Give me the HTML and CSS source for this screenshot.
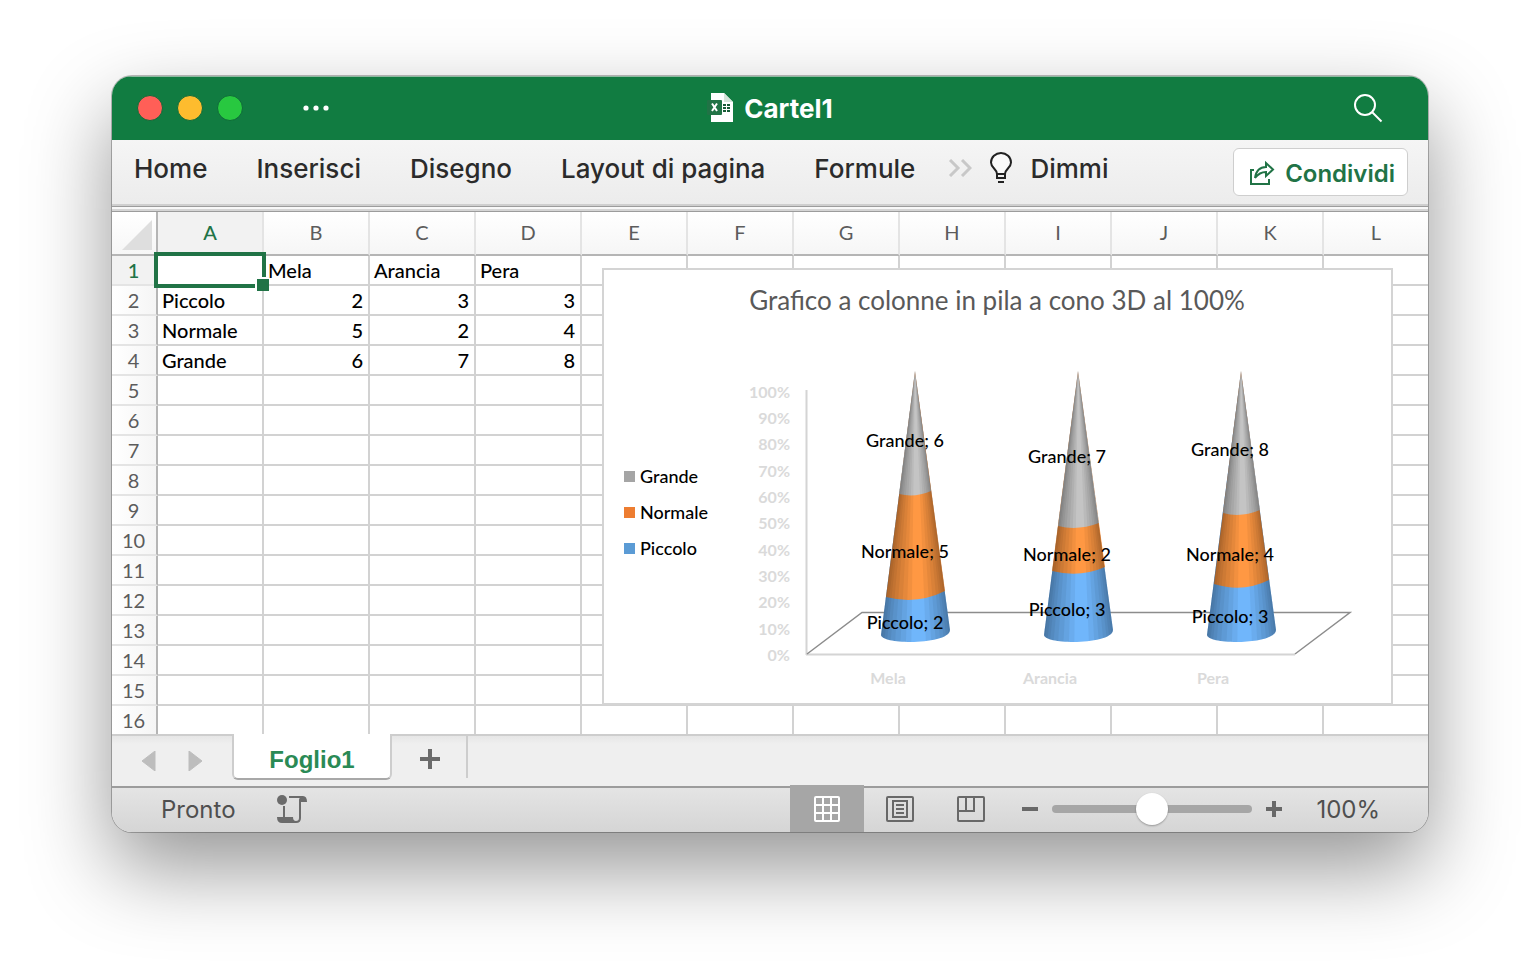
FILE: index.html
```html
<!DOCTYPE html>
<html lang="it">
<head>
    <meta charset="UTF-8">
    <meta name="viewport" content="width=device-width, initial-scale=1.0">
    <title>Cartel1</title>
    <link rel="stylesheet" href="styles.css">
</head>
<body>
    <div class="window">
        <header class="titlebar">
            <div class="title-left">
                <button class="light red" aria-label="Chiudi"></button>
                <button class="light yellow" aria-label="Riduci"></button>
                <button class="light green" aria-label="Ingrandisci"></button>
                <button class="icon-btn more" aria-label="Altro">
                    <svg width="26" height="6" viewBox="0 0 26 6" fill="#fff"><circle cx="3" cy="3" r="2.6"/><circle cx="13" cy="3" r="2.6"/><circle cx="23" cy="3" r="2.6"/></svg>
                </button>
            </div>
            <h1>
                <svg width="27" height="30" viewBox="0 0 27 30">
                    <path d="M4 0H17L26 9V29H4Z" fill="#fff"/>
                    <path d="M17 0V9H26Z" fill="#d5e5da"/>
                    <rect y="7" width="15" height="15" rx="1" fill="#217346"/>
                    <path d="M5 10.500L10 18M10 10.500L5 18" stroke="#fff" stroke-width="2"/>
                    <path d="M16 11h3v2h-3zM20 11h3v2h-3zM16 14h3v2h-3zM20 14h3v2h-3zM16 17h3v2h-3zM20 17h3v2h-3z" fill="#185c37"/>
                </svg>
                Cartel1
            </h1>
            <div class="title-right">
                <button class="icon-btn" aria-label="Cerca">
                    <svg width="30" height="30" viewBox="0 0 30 30" fill="none" stroke="#fff" stroke-width="2"><circle cx="12" cy="12" r="10"/><path d="M19 19L28.500 28.500"/></svg>
                </button>
            </div>
        </header>

        <nav class="ribbon">
            <button>Home</button>
            <button>Inserisci</button>
            <button>Disegno</button>
            <button>Layout di pagina</button>
            <button>Formule</button>
            <button class="overflow" aria-label="Altre schede">
                <svg width="24" height="18" viewBox="0 0 24 18" fill="none" stroke="#c8c8c8" stroke-width="3"><path d="M2 1L10 9L2 17M14 1L22 9L14 17"/></svg>
            </button>
            <button class="tell">
                <svg width="22" height="32" viewBox="0 0 22 32" fill="none" stroke="#222" stroke-width="2">
                    <path d="M7 22C7 17 1 16 1 10.500A10 9.500 0 0 1 21 10.500C21 16 15 17 15 22Z" fill="#fafafa"/>
                    <path d="M7 22V26H15V22M8 30H14"/>
                </svg>
                Dimmi
            </button>
            <button class="share">
                <svg width="26" height="26" viewBox="0 0 26 26" fill="none" stroke="#217346" stroke-width="2">
                    <path d="M5 10H2V24H20V19"/>
                    <path d="M6 18C7 11 11 7 17 7V3L24 9.500L17 16V12C12 12 9 14 6 18Z"/>
                </svg>
                Condividi
            </button>
        </nav>

        <main class="sheet">
            <table>
                <thead>
                    <tr><th class="corner" aria-label="Seleziona tutto"><svg width="30" height="30" viewBox="0 0 30 30"><path d="M30 0V30H0Z" fill="#dedede"/></svg></th><th class="current">A</th><th>B</th><th>C</th><th>D</th><th>E</th><th>F</th><th>G</th><th>H</th><th>I</th><th>J</th><th>K</th><th>L</th></tr>
                </thead>
                <tbody>
                    <tr><th class="current">1</th><td class="selected"><span class="cursor"></span></td><td>Mela</td><td>Arancia</td><td>Pera</td><td></td><td></td><td></td><td></td><td></td><td></td><td></td><td></td></tr>
                    <tr><th>2</th><td>Piccolo</td><td class="num">2</td><td class="num">3</td><td class="num">3</td><td></td><td></td><td></td><td></td><td></td><td></td><td></td><td></td></tr>
                    <tr><th>3</th><td>Normale</td><td class="num">5</td><td class="num">2</td><td class="num">4</td><td></td><td></td><td></td><td></td><td></td><td></td><td></td><td></td></tr>
                    <tr><th>4</th><td>Grande</td><td class="num">6</td><td class="num">7</td><td class="num">8</td><td></td><td></td><td></td><td></td><td></td><td></td><td></td><td></td></tr>
                    <tr><th>5</th><td></td><td></td><td></td><td></td><td></td><td></td><td></td><td></td><td></td><td></td><td></td><td></td></tr>
                    <tr><th>6</th><td></td><td></td><td></td><td></td><td></td><td></td><td></td><td></td><td></td><td></td><td></td><td></td></tr>
                    <tr><th>7</th><td></td><td></td><td></td><td></td><td></td><td></td><td></td><td></td><td></td><td></td><td></td><td></td></tr>
                    <tr><th>8</th><td></td><td></td><td></td><td></td><td></td><td></td><td></td><td></td><td></td><td></td><td></td><td></td></tr>
                    <tr><th>9</th><td></td><td></td><td></td><td></td><td></td><td></td><td></td><td></td><td></td><td></td><td></td><td></td></tr>
                    <tr><th>10</th><td></td><td></td><td></td><td></td><td></td><td></td><td></td><td></td><td></td><td></td><td></td><td></td></tr>
                    <tr><th>11</th><td></td><td></td><td></td><td></td><td></td><td></td><td></td><td></td><td></td><td></td><td></td><td></td></tr>
                    <tr><th>12</th><td></td><td></td><td></td><td></td><td></td><td></td><td></td><td></td><td></td><td></td><td></td><td></td></tr>
                    <tr><th>13</th><td></td><td></td><td></td><td></td><td></td><td></td><td></td><td></td><td></td><td></td><td></td><td></td></tr>
                    <tr><th>14</th><td></td><td></td><td></td><td></td><td></td><td></td><td></td><td></td><td></td><td></td><td></td><td></td></tr>
                    <tr><th>15</th><td></td><td></td><td></td><td></td><td></td><td></td><td></td><td></td><td></td><td></td><td></td><td></td></tr>
                    <tr class="last"><th>16</th><td></td><td></td><td></td><td></td><td></td><td></td><td></td><td></td><td></td><td></td><td></td><td></td></tr>
                </tbody>
            </table>

            <!-- chart floating over the cells -->
            <svg class="chart" width="791" height="437" viewBox="0 0 791 437">
                <defs>
                    <clipPath id="coneClip"><path d="M0 0L-34 264C-33 274 34 274 35 259Z"/></clipPath>
                    <!-- side shading, wedges fan out from the tip -->
                    <g id="shade" clip-path="url(#coneClip)" fill="#000" fill-opacity="0.05">
                        <path d="M0 0L-42 300H-37Z"/>
                        <path d="M0 0L-42 300H-34Z"/>
                        <path d="M0 0L-42 300H-31Z"/>
                        <path d="M0 0L-42 300H-27Z"/>
                        <path d="M0 0L-42 300H-22Z"/>
                        <path d="M0 0L-42 300H-16Z"/>
                        <path d="M0 0L-42 300H-10Z"/>
                        <path d="M0 0L-42 300H-4Z"/>
                        <path d="M0 0L44 300H38Z"/>
                        <path d="M0 0L44 300H35Z"/>
                        <path d="M0 0L44 300H32Z"/>
                        <path d="M0 0L44 300H28Z"/>
                        <path d="M0 0L44 300H23Z"/>
                        <path d="M0 0L44 300H18Z"/>
                        <path d="M0 0L44 300H12Z"/>
                    </g>
                </defs>
                <rect x="1" y="1" width="789" height="435" fill="#fff" stroke="#d4d4d4" stroke-width="2"/>
                <text class="chart-title" x="395" y="42">Grafico a colonne in pila a cono 3D al 100%</text>

                <g class="legend">
                    <rect x="22" y="203" width="11" height="11" fill="#a5a5a5"/>
                    <rect x="22" y="239" width="11" height="11" fill="#ed7d31"/>
                    <rect x="22" y="275" width="11" height="11" fill="#5b9bd5"/>
                    <text x="38" y="215">Grande</text>
                    <text x="38" y="251">Normale</text>
                    <text x="38" y="287">Piccolo</text>
                </g>

                <g class="axis">
                    <text x="188" y="130">100%</text>
                    <text x="188" y="156">90%</text>
                    <text x="188" y="182">80%</text>
                    <text x="188" y="209">70%</text>
                    <text x="188" y="235">60%</text>
                    <text x="188" y="261">50%</text>
                    <text x="188" y="288">40%</text>
                    <text x="188" y="314">30%</text>
                    <text x="188" y="340">20%</text>
                    <text x="188" y="367">10%</text>
                    <text x="188" y="393">0%</text>
                </g>
                <g class="categories">
                    <text x="286" y="416">Mela</text>
                    <text x="448" y="416">Arancia</text>
                    <text x="611" y="416">Pera</text>
                </g>

                <path d="M204.500 122V387M204 386.500H693" fill="none" stroke="#d4d4d4" stroke-width="2"/>
                <path d="M205 386L260 344.500H748L693 386" fill="none" stroke="#8c8c8c" stroke-width="1.500"/>

                <g transform="translate(313 103)">
                    <path d="M0 0L-34 264C-33 274 34 274 35 259Z" fill="#70b6fb"/>
                    <path d="M0 0L-29 226Q2 234 30 220Z" fill="#ff9843"/>
                    <path d="M0 0L-16 123Q0 127 16 120Z" fill="#c4c4c4"/>
                    <use href="#shade"/>
                </g>
                <g transform="translate(476 103)">
                    <path d="M0 0L-34 264C-33 274 34 274 35 259Z" fill="#70b6fb"/>
                    <path d="M0 0L-26 200Q2 207 27 196Z" fill="#ff9843"/>
                    <path d="M0 0L-20 155Q0 160 21 152Z" fill="#c4c4c4"/>
                    <use href="#shade"/>
                </g>
                <g transform="translate(639 103)">
                    <path d="M0 0L-34 264C-33 274 34 274 35 259Z" fill="#70b6fb"/>
                    <path d="M0 0L-27 213Q2 222 28 209Z" fill="#ff9843"/>
                    <path d="M0 0L-18 142Q0 147 19 139Z" fill="#c4c4c4"/>
                    <use href="#shade"/>
                </g>

                <g class="labels">
                    <text x="303" y="179">Grande; 6</text>
                    <text x="303" y="290">Normale; 5</text>
                    <text x="303" y="361">Piccolo; 2</text>
                    <text x="465" y="195">Grande; 7</text>
                    <text x="465" y="293">Normale; 2</text>
                    <text x="465" y="348">Piccolo; 3</text>
                    <text x="628" y="188">Grande; 8</text>
                    <text x="628" y="293">Normale; 4</text>
                    <text x="628" y="355">Piccolo; 3</text>
                </g>
            </svg>
        </main>

        <div class="tabs">
            <button class="arrow" aria-label="Foglio precedente"><svg width="16" height="20" viewBox="0 0 16 20"><path d="M14 0V20L1 10Z" fill="#bdbdbd" stroke="#bdbdbd" stroke-linejoin="round"/></svg></button>
            <button class="arrow" aria-label="Foglio successivo"><svg width="16" height="20" viewBox="0 0 16 20"><path d="M2 0V20L15 10Z" fill="#bdbdbd" stroke="#bdbdbd" stroke-linejoin="round"/></svg></button>
            <button class="tab">Foglio1</button>
            <button class="add" aria-label="Nuovo foglio"><svg width="20" height="20" viewBox="0 0 20 20" stroke="#6b6b6b" stroke-width="4"><path d="M0 10H20M10 0V20"/></svg></button>
        </div>

        <footer class="status">
            <span class="ready">Pronto</span>
            <button class="icon-btn macro" aria-label="Registra macro">
                <svg width="32" height="30" viewBox="0 0 32 30" fill="#6b6b6b">
                    <circle cx="6" cy="6" r="5"/>
                    <path d="M13 2H27Q31 2 31 8H25V24Q25 29 20 29H6Q1 29 1 23H17Q17 27 20 27Q23 27 23 24V6Q23 4 24 4H13Z"/>
                    <path d="M7 12H9V24H7Z"/>
                </svg>
            </button>
            <button class="view active" aria-label="Normale">
                <svg width="28" height="28" viewBox="0 0 28 28" fill="none" stroke="#fff" stroke-width="2"><rect x="2" y="2" width="24" height="24" rx="1"/><path d="M10 2V26M18 2V26M2 10H26M2 18H26"/></svg>
            </button>
            <button class="view" aria-label="Layout di pagina">
                <svg width="28" height="28" viewBox="0 0 28 28" fill="none" stroke="#686868" stroke-width="2"><rect x="1" y="2" width="26" height="24" rx="1"/><rect x="7" y="6" width="14" height="16"/><path d="M10 10H18M10 14H18M10 18H18"/></svg>
            </button>
            <button class="view" aria-label="Anteprima interruzioni">
                <svg width="28" height="28" viewBox="0 0 28 28" fill="none" stroke="#686868" stroke-width="2"><rect x="1" y="2" width="26" height="24" rx="1"/><path d="M9 2V16M17 2V16H1"/></svg>
            </button>
            <button class="icon-btn step" aria-label="Riduci zoom"><svg width="16" height="16" viewBox="0 0 16 16" stroke="#686868" stroke-width="4"><path d="M0 8H16"/></svg></button>
            <input class="zoom" type="range" min="0" max="200" value="100" aria-label="Zoom">
            <button class="icon-btn step" aria-label="Aumenta zoom"><svg width="16" height="16" viewBox="0 0 16 16" stroke="#686868" stroke-width="4"><path d="M0 8H16M8 0V16"/></svg></button>
            <span class="percent">100%</span>
        </footer>
    </div>
</body>
</html>
```

FILE: styles.css
```css
* {
    box-sizing: border-box;
}
body {
    margin: 0;
    padding: 76px 112px 148px;
    background: #fff;
    font-family: Inter, "Liberation Sans", sans-serif;
    color: #2b2b2b;
}
button {
    display: flex;
    align-items: center;
    justify-content: center;
    padding: 0;
    border: none;
    background: none;
    font: inherit;
    color: inherit;
    white-space: nowrap;
    cursor: pointer;
}
svg {
    display: block;
    flex: none;
}
.window {
    border-radius: 20px;
    overflow: hidden;
    box-shadow: 0 0 0 1px rgba(0, 0, 0, 0.25), 0 36px 84px rgba(0, 0, 0, 0.42);
}

/* title bar */
.titlebar {
    display: grid;
    grid-template-columns: 1fr auto 1fr;
    align-items: center;
    height: 64px;
    padding-bottom: 1px;
    background: #117c41;
    border-top: 1px solid #8fb8a0;
}
.title-left {
    display: flex;
    align-items: center;
    gap: 14px;
    padding-left: 25px;
}
.light {
    width: 26px;
    height: 26px;
    border-radius: 50%;
    border: 1px solid #0f6a39;
}
.red {
    background: #ff5f57;
}
.yellow {
    background: #febc2e;
}
.green {
    background: #28c840;
}
.more {
    margin-left: 46px;
}
h1 {
    display: flex;
    align-items: center;
    gap: 10px;
    margin: 0;
    font-size: 26px;
    font-weight: 700;
    color: #fff;
}
.title-right {
    display: flex;
    justify-content: flex-end;
    padding-right: 45px;
}

/* ribbon */
.ribbon {
    display: flex;
    align-items: center;
    height: 72px;
    padding: 0 20px 16px 22px;
    background: linear-gradient(#f5f5f5, #ececec 64px, #cfcfcf 64px, #cfcfcf 66px, #9c9c9c 66px, #9c9c9c 67px, #f8f8f8 67px, #f8f8f8 69px, #d5d5d5 69px, #d5d5d5 71px, #9c9c9c 71px);
    font-size: 26px;
    font-weight: 500;
}
.ribbon button {
    margin-right: 49px;
}
.ribbon .overflow {
    margin: 0 18px 0 -16px;
}
.ribbon .tell {
    gap: 18px;
}
.ribbon .share {
    height: 48px;
    gap: 10px;
    margin: 8px 0 0 auto;
    padding: 2px 12px 0 15px;
    border: 1px solid #cecece;
    border-radius: 6px;
    background: #fff;
    color: #217346;
    font-size: 24px;
    font-weight: 600;
}

/* cells */
.sheet {
    position: relative;
    overflow: hidden;
    background: #fff;
    font-family: Lato, "Open Sans", sans-serif;
}
table {
    table-layout: fixed;
    width: 1318px;
    border-collapse: separate;
    border-spacing: 0;
    font-size: 20px;
    color: #000;
}
th, td {
    height: 30px;
    padding: 0 5px 0 4px;
    border-right: 2px solid #d2d2d2;
    border-bottom: 2px solid #d2d2d2;
    line-height: 28px;
    text-align: left;
    white-space: nowrap;
}
td {
    font-weight: 500;
}
th {
    font-weight: 400;
    color: #5c5c5c;
    text-align: center;
}
thead th {
    width: 106px;
    height: 44px;
    padding: 0 0 2px;
    border-bottom-color: #b5b5b5;
    border-right-color: #e4e4e4;
    background: linear-gradient(#fff, #f6f6f6);
}
thead .corner {
    width: 46px;
    border-right-color: #b5b5b5;
}
.corner svg {
    margin: 6px 0 0 10px;
}
tbody th {
    border-right-color: #b5b5b5;
    border-bottom-color: #e4e4e4;
    background: linear-gradient(to right, #fff, #f5f5f5);
}
table .current {
    background: #f2f2f2;
    color: #217346;
    font-weight: 500;
}
td.num {
    text-align: right;
}
.last th, .last td {
    height: 28px;
    border-bottom: none;
}
.selected {
    position: relative;
}
.cursor {
    position: absolute;
    top: -4px;
    left: -4px;
    right: -4px;
    bottom: -4px;
    border: 4px solid #217346;
}
.cursor::after {
    content: "";
    position: absolute;
    right: -7px;
    bottom: -7px;
    width: 12px;
    height: 12px;
    background: #217346;
    border-top: 2px solid #fff;
    border-left: 2px solid #fff;
}

/* chart */
.chart {
    position: absolute;
    left: 490px;
    top: 56px;
    font-size: 18px;
    font-weight: 500;
}
.chart-title {
    font-size: 26px;
    font-weight: 400;
    fill: #595959;
    text-anchor: middle;
}
.axis, .categories {
    font-size: 16px;
    font-weight: 700;
    fill: #dadada;
}
.axis {
    text-anchor: end;
}
.categories, .labels {
    text-anchor: middle;
}

/* sheet tabs */
.tabs {
    display: flex;
    height: 52px;
    padding-left: 24px;
    border-top: 2px solid #cdcdcd;
    background: linear-gradient(#e6e6e6, #efefef 8px);
}
.arrow {
    width: 26px;
    height: 50px;
    margin-right: 20px;
}
.tab {
    width: 160px;
    height: 46px;
    margin: -2px 0 0 4px;
    padding-top: 8px;
    border: 2px solid #cdcdcd;
    border-top: none;
    border-bottom-color: #a8a8a8;
    border-radius: 0 0 6px 6px;
    background: #fff;
    color: #2a8a55;
    font-family: "Liberation Sans", Arial, sans-serif;
    font-size: 24px;
    font-weight: 700;
}
.add {
    width: 76px;
    height: 42px;
    padding: 4px 0 0 2px;
    border-right: 2px solid #cdcdcd;
}

/* status bar */
.status {
    display: flex;
    align-items: center;
    height: 46px;
    padding: 0 48px 2px 49px;
    border-top: 2px solid #9c9c9c;
    background: linear-gradient(#e4e4e4, #d5d5d5);
    color: #4f4f4f;
    font-size: 24px;
}
.macro {
    margin: 0 auto 0 40px;
}
.view {
    width: 71px;
    height: 48px;
}
.active {
    width: 74px;
    background: #a6a6a6;
}
.zoom {
    appearance: none;
    width: 200px;
    height: 34px;
    margin: 0 14px;
    background: none;
}
.zoom::-webkit-slider-runnable-track {
    height: 8px;
    border-radius: 4px;
    background: #a6a6a6;
}
.zoom::-webkit-slider-thumb {
    appearance: none;
    width: 32px;
    height: 32px;
    margin-top: -12px;
    border-radius: 50%;
    background: #fff;
    box-shadow: 0 1px 2px rgba(0, 0, 0, 0.3);
}
.view + .step {
    margin-left: 16px;
}
.percent {
    margin-left: 34px;
}
```
